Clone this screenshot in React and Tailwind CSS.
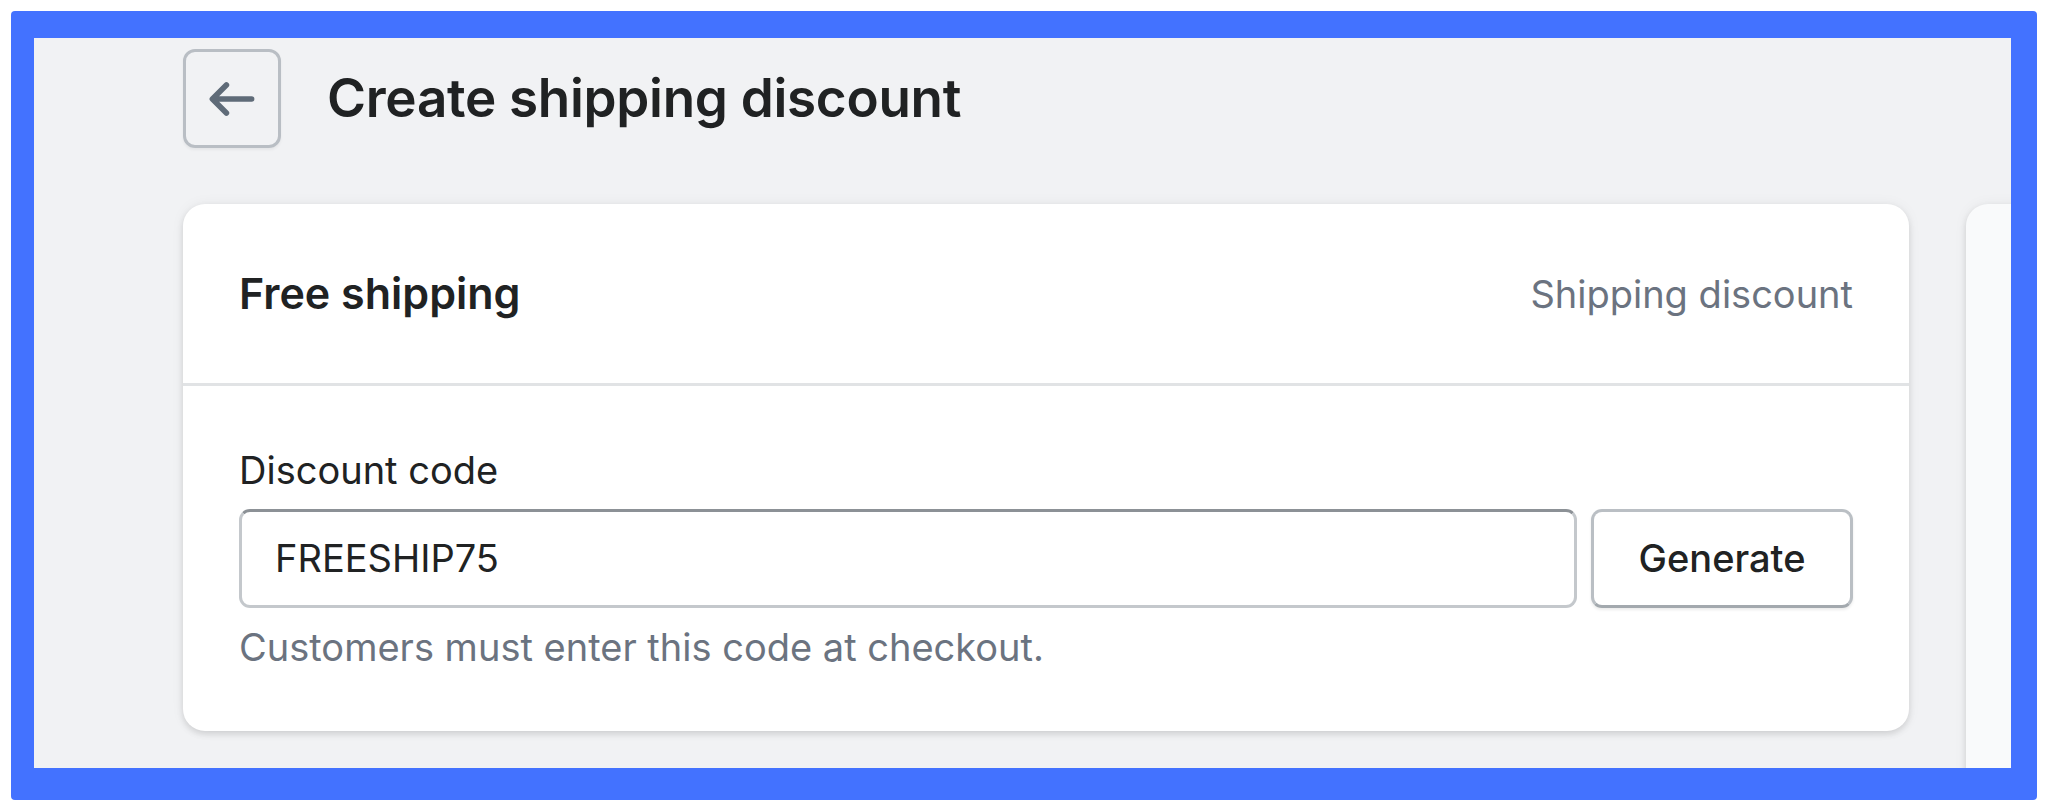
export default function App() {
  return (
    <div className="w-[2048px] h-[812px] bg-white overflow-hidden pt-[11px] pl-[11px] [font-family:Inter,'Noto_Sans',sans-serif]">
      <div className="w-[2026px] h-[789px] bg-[#4372ff] rounded-[4px] pl-[23px] pt-[27px] pr-[26px] pb-[32px]">
        <div className="w-full h-full bg-[#f1f2f4] overflow-hidden pl-[149px] pt-[11px]">
          <div className="flex items-center gap-[46px] h-[99px]">
            <button className="w-[98px] h-[99px] shrink-0 border-[3px] border-[#b9bec4] rounded-[12px] flex items-center justify-center shadow-[0_2px_3px_rgba(0,0,0,0.05)]">
              <svg width="56" height="56" viewBox="0 0 20 20" fill="#5f6b78">
                <path d="M17 9H5.414l3.293-3.293a.999.999 0 1 0-1.414-1.414l-5 5a.999.999 0 0 0 0 1.414l5 5a.997.997 0 0 0 1.414 0 .999.999 0 0 0 0-1.414L5.414 11H17a1 1 0 1 0 0-2z" />
              </svg>
            </button>
            <h1 className="text-[53px] leading-none font-semibold text-[#202223] tracking-[-0.3px]">
              Create shipping discount
            </h1>
          </div>
          <div className="flex items-start gap-[57px] mt-[56px]">
            <div className="w-[1726px] shrink-0 bg-white rounded-[22px] shadow-[0_3px_6px_rgba(0,0,0,0.12),0_0_14px_rgba(23,24,24,0.05)]">
              <div className="flex items-center justify-between px-[56px] h-[182px] border-b-[3px] border-[#e1e3e5]">
                <h2 className="text-[43px] font-semibold text-[#202223] leading-none">Free shipping</h2>
                <span className="text-[38px] text-[#6b7380] leading-none">Shipping discount</span>
              </div>
              <div className="px-[56px] pt-[56px] pb-[56px]">
                <div className="text-[38px] leading-[56px] text-[#202223]">Discount code</div>
                <div className="mt-[11px] flex gap-[14px] h-[99px]">
                  <div className="flex-1 flex items-center border-[3px] border-[#c4c8cc] border-t-[#8c9196] rounded-[11px] px-[33px] text-[38px] text-[#202223]">
                    FREESHIP75
                  </div>
                  <button className="w-[262px] shrink-0 border-[3px] border-[#babfc4] border-b-[#a3a9ae] rounded-[11px] bg-white text-[38px] font-medium text-[#202223] shadow-[0_2px_3px_rgba(0,0,0,0.08)]">
                    Generate
                  </button>
                </div>
                <div className="mt-[11px] text-[38px] leading-[56px] text-[#6b7380]">
                  Customers must enter this code at checkout.
                </div>
              </div>
            </div>
            <div className="w-[400px] h-[700px] shrink-0 bg-[#f9fafb] rounded-[22px] shadow-[0_3px_6px_rgba(0,0,0,0.12),0_0_14px_rgba(23,24,24,0.05)]" />
          </div>
        </div>
      </div>
    </div>
  );
}
